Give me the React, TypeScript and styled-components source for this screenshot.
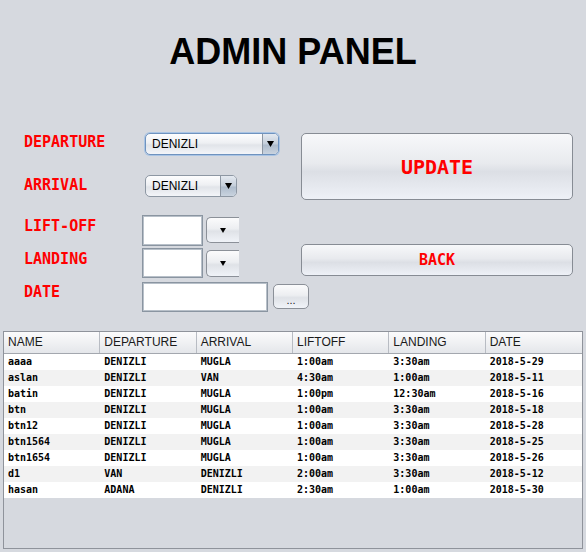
import React from "react";
import styled, { createGlobalStyle } from "styled-components";

const GlobalStyle = createGlobalStyle`
  html, body {
    margin: 0;
    padding: 0;
    background: #d6d9df;
  }
  body {
    font-family: "Liberation Sans", Arial, sans-serif;
  }
`;

const Window = styled.div`
  width: 586px;
  height: 552px;
  background: #d6d9df;
  overflow: hidden;
  box-sizing: border-box;
  padding-top: 34px;
`;

const Title = styled.h1`
  margin: 0;
  text-align: center;
  font: bold 36px/36px "Liberation Sans", Arial, sans-serif;
  color: #000;
`;

const Form = styled.div`
  display: flex;
  margin-top: 63px;
  padding-left: 24px;
  height: 179px;
`;

const LeftColumn = styled.div`
  display: flex;
  flex-direction: column;
  width: 277px;
  flex: none;
`;

const RightColumn = styled.div`
  display: flex;
  flex-direction: column;
  width: 272px;
  flex: none;
`;

const FieldRow = styled.div<{ $mt: number }>`
  display: flex;
  align-items: flex-start;
  margin-top: ${(p) => p.$mt}px;
`;

const Label = styled.div<{ $pt: number }>`
  width: 118px;
  flex: none;
  padding-top: ${(p) => p.$pt}px;
  font: bold 15px/18px "DejaVu Sans Mono", "Liberation Mono", monospace;
  color: #ff0000;
`;

const Combo = styled.div<{ $w: number; $focused?: boolean }>`
  display: flex;
  align-items: stretch;
  box-sizing: border-box;
  margin-left: 3px;
  width: ${(p) => p.$w}px;
  height: 22px;
  border: 1px solid ${(p) => (p.$focused ? "#6f93bf" : "#8d97a3")};
  border-radius: 5px;
  box-shadow: ${(p) => (p.$focused ? "0 0 0 1px #a9c4e4" : "none")};
  background: linear-gradient(#fdfdfe, #eef0f3 45%, #e1e4e9 55%, #f3f5f9);
  overflow: hidden;
`;

const ComboText = styled.div`
  flex: 1;
  padding-left: 6px;
  font: 12px/20px "Liberation Sans", Arial, sans-serif;
  color: #000;
`;

const ComboArrow = styled.div`
  width: 15px;
  flex: none;
  display: flex;
  align-items: center;
  justify-content: center;
  border-left: 1px solid #8d97a3;
  background: linear-gradient(#e4e9f0, #c4ceda 50%, #aebccc 55%, #c9d3df);
`;

const TextField = styled.div<{ $w: number; $h: number }>`
  box-sizing: border-box;
  width: ${(p) => p.$w}px;
  height: ${(p) => p.$h}px;
  background: #fff;
  border: 1px solid #8a95a1;
  box-shadow: inset 0 0 0 1px #b8c0c9;
  flex: none;
`;

const SmallButton = styled.div<{ $h: number; $mt: number; $ml: number; $w: number; $clipped?: boolean }>`
  box-sizing: border-box;
  flex: none;
  display: flex;
  align-items: center;
  justify-content: center;
  width: ${(p) => p.$w}px;
  height: ${(p) => p.$h}px;
  margin-top: ${(p) => p.$mt}px;
  margin-left: ${(p) => p.$ml}px;
  border: 1px solid #8b9098;
  border-right: ${(p) => (p.$clipped ? "none" : "1px solid #8b9098")};
  border-radius: ${(p) => (p.$clipped ? "5px 0 0 5px" : "5px")};
  background: linear-gradient(#fbfbfc, #eceef1 45%, #dfe2e7 55%, #f0f3f8);
  font: 11px "Liberation Sans", Arial, sans-serif;
  color: #222;
`;

const Dots = styled.span`
  margin-top: 6px;
`;

const BigButton = styled.button<{ $h: number; $mt: number; $size: number }>`
  box-sizing: border-box;
  width: 100%;
  height: ${(p) => p.$h}px;
  margin: ${(p) => p.$mt}px 0 0;
  padding: 0;
  border: 1px solid #878c94;
  border-radius: 5px;
  background: linear-gradient(#f7f8fa, #e8eaee 45%, #dcdfe5 58%, #eef1f7);
  font: bold ${(p) => p.$size}px "DejaVu Sans Mono", "Liberation Mono", monospace;
  color: #ff0000;
`;

const TableBox = styled.div`
  box-sizing: border-box;
  margin: 19px 3px 0;
  height: 218px;
  border: 1px solid #8f939b;
  background: #d6d9df;
`;

const HeaderRow = styled.div`
  display: grid;
  grid-template-columns: repeat(6, 1fr);
  box-sizing: border-box;
  height: 22px;
  border-bottom: 1px solid #a3a7ae;
  background: linear-gradient(#fbfbfc, #f0f1f3 50%, #e4e6ea);
`;

const HeaderCell = styled.div`
  padding-left: 4px;
  font: 12px/21px "Liberation Sans", Arial, sans-serif;
  color: #1a1a1a;
  border-right: 1px solid #b8bcc3;
  &:last-child {
    border-right: none;
  }
`;

const DataRow = styled.div<{ $alt: boolean }>`
  display: grid;
  grid-template-columns: repeat(6, 1fr);
  height: 16px;
  background: ${(p) => (p.$alt ? "#f2f2f2" : "#ffffff")};
`;

const DataCell = styled.div`
  padding-left: 4px;
  font: bold 10px/16px "DejaVu Sans Mono", "Liberation Mono", monospace;
  color: #000;
  white-space: nowrap;
  overflow: hidden;
`;

const Arrow = ({ w }: { w: number }) => (
  <svg width={w} height={Math.round(w * 0.85)} viewBox="0 0 10 8.5">
    <path d="M0 0H10L5 8.5Z" fill="#000" />
  </svg>
);

const columns = ["NAME", "DEPARTURE", "ARRIVAL", "LIFTOFF", "LANDING", "DATE"];

const flights = [
  ["aaaa", "DENIZLI", "MUGLA", "1:00am", "3:30am", "2018-5-29"],
  ["aslan", "DENIZLI", "VAN", "4:30am", "1:00am", "2018-5-11"],
  ["batin", "DENIZLI", "MUGLA", "1:00pm", "12:30am", "2018-5-16"],
  ["btn", "DENIZLI", "MUGLA", "1:00am", "3:30am", "2018-5-18"],
  ["btn12", "DENIZLI", "MUGLA", "1:00am", "3:30am", "2018-5-28"],
  ["btn1564", "DENIZLI", "MUGLA", "1:00am", "3:30am", "2018-5-25"],
  ["btn1654", "DENIZLI", "MUGLA", "1:00am", "3:30am", "2018-5-26"],
  ["d1", "VAN", "DENIZLI", "2:00am", "3:30am", "2018-5-12"],
  ["hasan", "ADANA", "DENIZLI", "2:30am", "1:00am", "2018-5-30"],
];

function App() {
  return (
    <Window>
      <GlobalStyle />
      <Title>ADMIN PANEL</Title>

      <Form>
        <LeftColumn>
          <FieldRow $mt={0}>
            <Label $pt={0}>DEPARTURE</Label>
            <Combo $w={134} $focused>
              <ComboText>DENIZLI</ComboText>
              <ComboArrow>
                <Arrow w={7} />
              </ComboArrow>
            </Combo>
          </FieldRow>

          <FieldRow $mt={20}>
            <Label $pt={1}>ARRIVAL</Label>
            <Combo $w={92}>
              <ComboText>DENIZLI</ComboText>
              <ComboArrow>
                <Arrow w={7} />
              </ComboArrow>
            </Combo>
          </FieldRow>

          <FieldRow $mt={18}>
            <Label $pt={2}>LIFT-OFF</Label>
            <TextField $w={61} $h={31} />
            <SmallButton $w={33} $h={26} $mt={2} $ml={3} $clipped>
              <Arrow w={6} />
            </SmallButton>
          </FieldRow>

          <FieldRow $mt={2}>
            <Label $pt={2}>LANDING</Label>
            <TextField $w={61} $h={30} />
            <SmallButton $w={33} $h={27} $mt={2} $ml={3} $clipped>
              <Arrow w={6} />
            </SmallButton>
          </FieldRow>

          <FieldRow $mt={4}>
            <Label $pt={1}>DATE</Label>
            <TextField $w={126} $h={30} />
            <SmallButton $w={36} $h={25} $mt={2} $ml={5}>
              <Dots>...</Dots>
            </SmallButton>
          </FieldRow>
        </LeftColumn>

        <RightColumn>
          <BigButton $h={67} $mt={0} $size={20}>UPDATE</BigButton>
          <BigButton $h={32} $mt={44} $size={15}>BACK</BigButton>
        </RightColumn>
      </Form>

      <TableBox>
        <HeaderRow>
          {columns.map((c) => (
            <HeaderCell key={c}>{c}</HeaderCell>
          ))}
        </HeaderRow>
        {flights.map((row, i) => (
          <DataRow key={row[0]} $alt={i % 2 === 1}>
            {row.map((v, j) => (
              <DataCell key={j}>{v}</DataCell>
            ))}
          </DataRow>
        ))}
      </TableBox>
    </Window>
  );
}

export default App;
